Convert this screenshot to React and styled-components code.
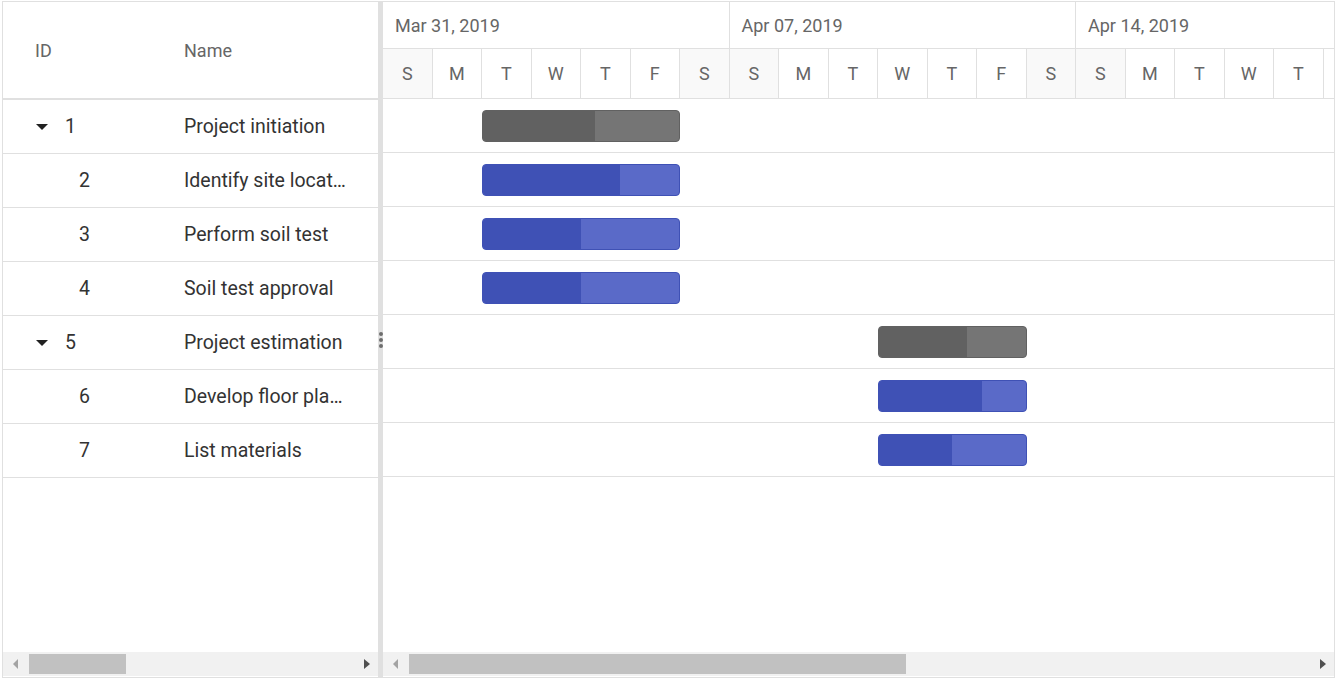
import React from 'react'
import styled, { createGlobalStyle } from 'styled-components'

const GlobalStyle = createGlobalStyle`
  body {
    margin: 0;
    background: #fff;
    font-family: Roboto, "Noto Sans", sans-serif;
  }
`

const DAY = 49.5
const ROW = 54

const tasks = [
  { id: 1, name: 'Project initiation', parent: true, start: 2, days: 4, progress: 57 },
  { id: 2, name: 'Identify site location', start: 2, days: 4, progress: 70 },
  { id: 3, name: 'Perform soil test', start: 2, days: 4, progress: 50 },
  { id: 4, name: 'Soil test approval', start: 2, days: 4, progress: 50 },
  { id: 5, name: 'Project estimation', parent: true, start: 10, days: 3, progress: 60 },
  { id: 6, name: 'Develop floor plan for estimation', start: 10, days: 3, progress: 70 },
  { id: 7, name: 'List materials', start: 10, days: 3, progress: 50 },
]

const weeks = ['Mar 31, 2019', 'Apr 07, 2019', 'Apr 14, 2019']
const dayLetters = ['S', 'M', 'T', 'W', 'T', 'F', 'S']

const Gantt = styled.div`
  margin: 1px 0 0 2px;
  width: 1333px;
  height: 677px;
  box-sizing: border-box;
  border: 1px solid #e0e0e0;
  display: flex;
  overflow: hidden;
`

const Pane = styled.div`
  width: ${p => p.$width};
  flex: ${p => (p.$grow ? 1 : 'none')};
  display: flex;
  flex-direction: column;
  min-width: 0;
  overflow: hidden;
`

const GridHeader = styled.div`
  height: 96px;
  border-bottom: 2px solid #e0e0e0;
  display: flex;
  align-items: center;
  color: #666;
  font-size: 18px;
`

const HeadCell = styled.div`
  width: ${p => p.$width || 'auto'};
  flex: ${p => (p.$width ? 'none' : 1)};
  padding-left: ${p => p.$pad}px;
  box-sizing: border-box;
`

const Body = styled.div`
  flex: 1;
`

const Row = styled.div`
  height: ${ROW}px;
  box-sizing: border-box;
  border-bottom: 1px solid #e0e0e0;
  display: flex;
  align-items: center;
  color: #333;
  font-size: 19.5px;
`

const IdCell = styled.div`
  width: 181px;
  flex: none;
  box-sizing: border-box;
  padding-left: ${p => p.$indent}px;
  display: flex;
  align-items: center;
`

const NameCell = styled.div`
  flex: 1;
  min-width: 0;
  padding-right: 28px;
  white-space: nowrap;
  overflow: hidden;
  text-overflow: ellipsis;
`

const Caret = styled.span`
  width: 0;
  height: 0;
  border-left: 6px solid transparent;
  border-right: 6px solid transparent;
  border-top: 6px solid #212121;
  margin-right: 17px;
`

const ScrollBar = styled.div`
  height: 24px;
  margin-bottom: 1px;
  background: #f1f1f1;
  display: flex;
  align-items: center;
  padding: 0 8px 0 10px;
`

const Arrow = styled.span`
  width: 0;
  height: 0;
  border-top: 5px solid transparent;
  border-bottom: 5px solid transparent;
  ${p =>
    p.$dir === 'left'
      ? `border-right: 5px solid ${p.$active ? '#505050' : '#a3a3a3'};`
      : `border-left: 6px solid ${p.$active ? '#505050' : '#a3a3a3'};`}
`

const Track = styled.div`
  flex: 1;
  height: 20px;
  margin: 0 ${p => p.$gapRight}px 0 ${p => p.$gapLeft}px;
`

const Thumb = styled.div`
  height: 100%;
  background: #c1c1c1;
`

const Splitter = styled.div`
  width: 5px;
  flex: none;
  background: #e0e0e0;
  display: flex;
  flex-direction: column;
  align-items: center;
  justify-content: center;
  gap: 2px;
`

const Dot = styled.span`
  width: 4px;
  height: 4px;
  border-radius: 50%;
  background: #6d6d6d;
`

const Timeline = styled.div`
  height: 96px;
  border-bottom: 1px solid #e0e0e0;
  display: flex;
  flex-direction: column;
  color: #666;
  white-space: nowrap;
`

const Tier = styled.div`
  height: ${p => p.$h}px;
  display: flex;
  border-bottom: ${p => (p.$line ? '1px solid #e0e0e0' : 'none')};
`

const WeekCell = styled.div`
  width: ${DAY * 7}px;
  flex: none;
  box-sizing: border-box;
  border-right: 1px solid #e0e0e0;
  padding-left: 12px;
  font-size: 18px;
  display: flex;
  align-items: center;
`

const DayCell = styled.div`
  width: ${DAY}px;
  flex: none;
  box-sizing: border-box;
  border-right: 1px solid #e0e0e0;
  background: ${p => (p.$weekend ? '#f9f9f9' : '#fff')};
  font-size: 18px;
  display: flex;
  align-items: center;
  justify-content: center;
`

const ChartRow = styled.div`
  height: ${ROW}px;
  box-sizing: border-box;
  border-bottom: 1px solid #e0e0e0;
  padding-top: 1px;
  display: flex;
  align-items: center;
`

const Bar = styled.div`
  height: 32px;
  box-sizing: border-box;
  border: 1px solid ${p => (p.$parent ? '#616161' : '#3f51b5')};
  border-radius: 4px;
  background: ${p => (p.$parent ? '#757575' : '#5a6ac8')};
  overflow: hidden;
  flex: none;
`

const Progress = styled.div`
  height: 100%;
  background: ${p => (p.$parent ? '#616161' : '#3f51b5')};
`

const days = Array.from({ length: 21 }, (_, i) => i)

export default function App() {
  return (
    <>
      <GlobalStyle />
      <Gantt>
        <Pane $width="375px">
          <GridHeader>
            <HeadCell $width="181px" $pad={32}>ID</HeadCell>
            <HeadCell $pad={0}>Name</HeadCell>
          </GridHeader>
          <Body>
            {tasks.map(t => (
              <Row key={t.id}>
                <IdCell $indent={t.parent ? 33 : 76}>
                  {t.parent && <Caret />}
                  {t.id}
                </IdCell>
                <NameCell>{t.name}</NameCell>
              </Row>
            ))}
          </Body>
          <ScrollBar>
            <Arrow $dir="left" />
            <Track $gapLeft={11} $gapRight={0}>
              <Thumb style={{ width: '29%' }} />
            </Track>
            <Arrow $dir="right" $active />
          </ScrollBar>
        </Pane>

        <Splitter>
          <Dot />
          <Dot />
          <Dot />
        </Splitter>

        <Pane $grow>
          <Timeline>
            <Tier $h={46} $line>
              {weeks.map(w => (
                <WeekCell key={w}>{w}</WeekCell>
              ))}
            </Tier>
            <Tier $h={49}>
              {days.map(d => (
                <DayCell key={d} $weekend={d % 7 === 0 || d % 7 === 6}>
                  {dayLetters[d % 7]}
                </DayCell>
              ))}
            </Tier>
          </Timeline>
          <Body>
            {tasks.map(t => (
              <ChartRow key={t.id}>
                <Bar
                  $parent={t.parent}
                  style={{ marginLeft: t.start * DAY, width: t.days * DAY }}
                >
                  <Progress $parent={t.parent} style={{ width: `${t.progress}%` }} />
                </Bar>
              </ChartRow>
            ))}
          </Body>
          <ScrollBar>
            <Arrow $dir="left" />
            <Track $gapLeft={11} $gapRight={414}>
              <Thumb />
            </Track>
            <Arrow $dir="right" $active />
          </ScrollBar>
        </Pane>
      </Gantt>
    </>
  )
}
